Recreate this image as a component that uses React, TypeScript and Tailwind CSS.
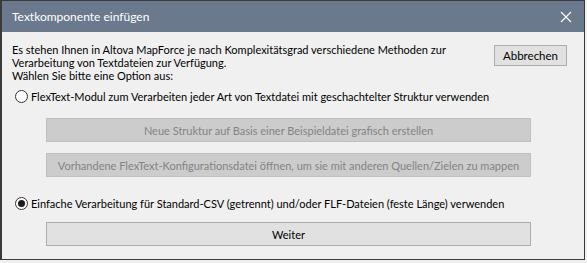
import React from "react";

const font = { fontFamily: 'Lato, "Noto Sans", sans-serif' };

const Radio = ({ checked }: { checked?: boolean }) => (
  <span className="flex h-[13px] w-[13px] shrink-0 items-center justify-center rounded-full border border-[#333333] bg-white">
    {checked && <span className="h-[7px] w-[7px] rounded-full bg-[#1a1a1a]" />}
  </span>
);

const App = () => {
  return (
    <div className="h-[263px] w-[587px] bg-[#f0f0f0] text-[11px] leading-[13px] text-black" style={font}>
      <div className="flex h-[260px] w-[585px] flex-col border border-l-2 border-[#3a3a3a]">
        {/* title bar */}
        <div className="flex h-[31px] shrink-0 items-center justify-between bg-[#6b798c] pl-[10px] pr-[9px]">
          <span className="text-[12px] text-white">Textkomponente einfügen</span>
          <svg width="12" height="12" viewBox="0 0 12 12" className="mr-[3px]">
            <path d="M1 1 L11 11 M11 1 L1 11" stroke="#ffffff" strokeWidth="1.1" />
          </svg>
        </div>

        <div className="flex flex-1 flex-col pl-[10px] pr-[17px] pt-[11px]">
          <div className="flex items-start justify-between">
            <p className="whitespace-nowrap">
              Es stehen Ihnen in Altova MapForce je nach Komplexitätsgrad verschiedene Methoden zur
              <br />
              Verarbeitung von Textdateien zur Verfügung.
              <br />
              Wählen Sie bitte eine Option aus:
            </p>
            <button
              type="button"
              className="mt-[2px] h-[21px] w-[73px] shrink-0 border border-[#adadad] bg-[#e1e1e1] text-[11.5px] leading-none"
            >
              Abbrechen
            </button>
          </div>

          <label className="mt-[8px] flex h-[13px] items-center gap-[3px] whitespace-nowrap pl-[3px]">
            <Radio />
            <span>FlexText-Modul zum Verarbeiten jeder Art von Textdatei mit geschachtelter Struktur verwenden</span>
          </label>

          <div className="mt-[15px] flex flex-col gap-[11px] pl-[34px] pr-[36px]">
            <button
              type="button"
              disabled
              className="h-[24px] w-full whitespace-nowrap border border-[#bfbfbf] bg-[#cccccc] text-[11px] text-[#838383]"
            >
              Neue Struktur auf Basis einer Beispieldatei grafisch erstellen
            </button>
            <button
              type="button"
              disabled
              className="h-[24px] w-full whitespace-nowrap border border-[#bfbfbf] bg-[#cccccc] text-[11px] text-[#838383]"
            >
              Vorhandene FlexText-Konfigurationsdatei öffnen, um sie mit anderen Quellen/Zielen zu mappen
            </button>
          </div>

          <label className="mt-[20px] flex h-[13px] items-center gap-[3px] whitespace-nowrap pl-[3px]">
            <Radio checked />
            <span>Einfache Verarbeitung für Standard-CSV (getrennt) und/oder FLF-Dateien (feste Länge) verwenden</span>
          </label>

          <div className="mt-[12px] pl-[34px] pr-[36px]">
            <button
              type="button"
              className="h-[24px] w-full border border-[#adadad] bg-[#e1e1e1] text-[11px]"
            >
              Weiter
            </button>
          </div>
        </div>
      </div>
    </div>
  );
};

export default App;
